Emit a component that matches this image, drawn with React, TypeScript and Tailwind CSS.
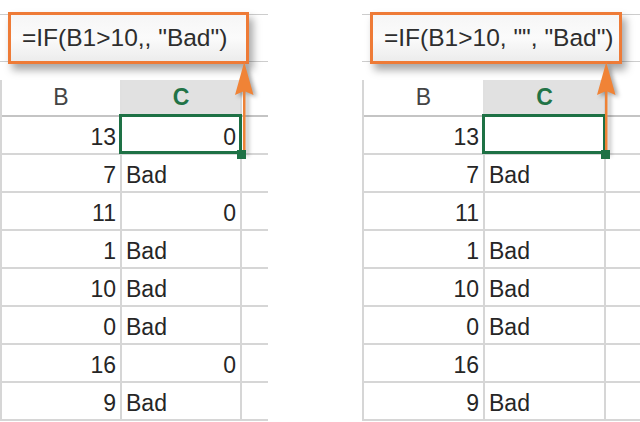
import { FC } from "react";

type Row = {
  b: string
  c: string
}

type Props = {
  formula: string
  rows: Row[]
  colWidth: number
  boxWidth: number
  panelWidth: number
}

const leftRows: Row[] = [
  { b: "13", c: "0" },
  { b: "7", c: "Bad" },
  { b: "11", c: "0" },
  { b: "1", c: "Bad" },
  { b: "10", c: "Bad" },
  { b: "0", c: "Bad" },
  { b: "16", c: "0" },
  { b: "9", c: "Bad" },
];

const rightRows: Row[] = leftRows.map((r) => ({ b: r.b, c: r.c === "0" ? "" : r.c }));

const Arrow: FC = () => (
  <svg
    className="absolute left-[231px] top-[60px] z-20 drop-shadow-[3px_2px_2px_rgba(0,0,0,0.35)]"
    width="28"
    height="98"
    viewBox="0 0 28 98"
  >
    <rect x="12" y="28" width="2.5" height="66" fill="#ee8236" />
    <polygon points="13.25,2 4,35 13.25,31 22.5,35" fill="#f08336" />
  </svg>
);

const Panel: FC<Props> = ({ formula, rows, colWidth, boxWidth, panelWidth }: Props) => {
  return (
    <div className="relative shrink-0" style={{ width: panelWidth }}>
      <div className="relative mt-[14px] h-[48px] border-y border-[#cdcdcd]">
        <div
          className="absolute left-[8px] top-[-3px] flex h-[52px] items-center border-[3px] border-[#ee7b37] bg-gradient-to-b from-[#f6f6f6] via-[#fbfbfb] to-[#ececec] pl-[11px] shadow-[4px_6px_8px_rgba(0,0,0,0.35)]"
          style={{ width: boxWidth }}
        >
          <span className="whitespace-pre text-[24.5px] leading-none text-[#2e2e2e]">{formula}</span>
        </div>
      </div>

      <div className="mt-[18px] border-l-2 border-[#d6d6d6]">
        <div className="flex h-[37px] border-b-2 border-[#c4c4c4]">
          <div
            className="flex items-center justify-center border-r-2 border-[#e0e0e0] text-[23px] text-[#444444]"
            style={{ width: colWidth }}
          >
            B
          </div>
          <div
            className="flex items-center justify-center border-r-2 border-[#d6d6d6] bg-[#e1e1e1] text-[23px] font-bold text-[#217346]"
            style={{ width: colWidth }}
          >
            C
          </div>
          <div className="flex-1" />
        </div>

        {rows.map((row, i) => (
          <div key={i} className="flex h-[38px] border-b-2 border-[#d6d6d6]">
            <div
              className="flex items-center justify-end border-r-2 border-[#d6d6d6] pr-[4px] pt-[4px] text-[23px] text-[#262626]"
              style={{ width: colWidth }}
            >
              {row.b}
            </div>
            <div
              className={
                "relative flex items-center border-r-2 border-[#d6d6d6] pt-[4px] text-[23px] text-[#262626] " +
                (row.c === "Bad" ? "justify-start pl-[4px]" : "justify-end pr-[4px]")
              }
              style={{ width: colWidth }}
            >
              {row.c}
              {i === 0 && (
                <>
                  <div className="absolute -left-[3px] -top-[3px] -right-[2px] -bottom-[1px] z-10 border-[3px] border-[#1e7145]" />
                  <div className="absolute -right-[6px] -bottom-[6px] z-30 h-[9px] w-[9px] bg-[#1e7145]" />
                </>
              )}
            </div>
            <div className="flex-1" />
          </div>
        ))}
      </div>

      <Arrow />
    </div>
  );
};

export default function App() {
  return (
    <div className="flex h-[422px] w-[640px] overflow-hidden bg-white font-['Liberation_Sans',Arial,sans-serif]">
      <Panel formula={'=IF(B1>10,, "Bad")'} rows={leftRows} colWidth={120} boxWidth={241} panelWidth={268} />
      <div className="w-[94px] shrink-0" />
      <Panel formula={'=IF(B1>10, "", "Bad")'} rows={rightRows} colWidth={121} boxWidth={252} panelWidth={278} />
    </div>
  );
}
